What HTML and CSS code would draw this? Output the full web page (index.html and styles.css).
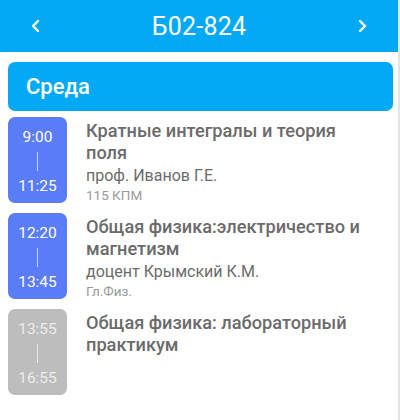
FILE: index.html
```html
<!DOCTYPE html>
<html lang="ru">
<head>
<meta charset="utf-8">
<link rel="stylesheet" href="styles.css">
</head>
<body>
<div class="screen">
  <header class="topbar">
    <svg class="chev" width="12" height="16" viewBox="0 0 12 16"><path d="M8 3 L3 8 L8 13" fill="none" stroke="#fff" stroke-width="2.4" stroke-linecap="round" stroke-linejoin="round"/></svg>
    <div class="group">Б02-824</div>
    <svg class="chev" width="12" height="16" viewBox="0 0 12 16"><path d="M4 3 L9 8 L4 13" fill="none" stroke="#fff" stroke-width="2.4" stroke-linecap="round" stroke-linejoin="round"/></svg>
  </header>
  <main class="content">
    <div class="day">Среда</div>
    <div class="lesson">
      <div class="time">
        <span>9:00</span>
        <i class="sep"></i>
        <span>11:25</span>
      </div>
      <div class="info">
        <div class="title">Кратные интегралы и теория поля</div>
        <div class="teacher">проф. Иванов Г.Е.</div>
        <div class="room">115 КПМ</div>
      </div>
    </div>
    <div class="lesson">
      <div class="time">
        <span>12:20</span>
        <i class="sep"></i>
        <span>13:45</span>
      </div>
      <div class="info">
        <div class="title">Общая физика:электричество и магнетизм</div>
        <div class="teacher">доцент Крымский К.М.</div>
        <div class="room">Гл.Физ.</div>
      </div>
    </div>
    <div class="lesson">
      <div class="time past">
        <span>13:55</span>
        <i class="sep"></i>
        <span>16:55</span>
      </div>
      <div class="info">
        <div class="title">Общая физика: лабораторный практикум</div>
      </div>
    </div>
  </main>
</div>
</body>
</html>
```
FILE: styles.css
```css
html, body {
  margin: 0;
  padding: 0;
  background: #fff;
}
body {
  font-family: Roboto, "Noto Sans", sans-serif;
  width: 400px;
  height: 420px;
  overflow: hidden;
}
.screen {
  width: 398px;
  height: 420px;
  border-right: 2px solid #e4e4e4;
}
.topbar {
  height: 52px;
  background: #03a9f4;
  display: flex;
  align-items: center;
  justify-content: space-between;
  padding: 0 30px 0 30px;
  color: #fff;
}
.chev {
  display: block;
}
.group {
  font-size: 25px;
  font-weight: 400;
  letter-spacing: 0.2px;
}
.content {
  padding: 10px 5px 0 8px;
  display: flex;
  flex-direction: column;
}
.day {
  height: 49px;
  background: #03a9f4;
  border-radius: 7px;
  color: #fff;
  font-size: 22px;
  font-weight: 500;
  display: flex;
  align-items: center;
  padding-left: 18px;
  margin-bottom: 6px;
}
.lesson {
  display: flex;
  gap: 19px;
  margin-bottom: 10px;
  padding-right: 20px;
}
.time {
  flex: none;
  width: 59px;
  height: 86px;
  border-radius: 7px;
  background: #5a7cf6;
  color: #fff;
  font-size: 15.5px;
  display: flex;
  flex-direction: column;
  align-items: center;
  justify-content: space-between;
  padding: 11px 0 8px;
  box-sizing: border-box;
}
.time.past {
  background: #bdbdbd;
  color: #ececec;
}
.sep {
  display: block;
  width: 1px;
  height: 19px;
  background: rgba(255,255,255,0.7);
}
.info {
  padding-top: 3px;
  color: #6b6b6b;
}
.title {
  font-size: 18.2px;
  font-weight: 500;
  line-height: 22px;
}
.teacher {
  font-size: 16px;
  line-height: 22px;
  margin-top: 1px;
}
.room {
  font-size: 13.5px;
  line-height: 16px;
  color: #9a9a9a;
}
```
